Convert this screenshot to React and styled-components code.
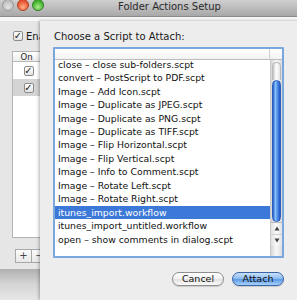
import React from 'react';
import styled, {createGlobalStyle} from "styled-components";

const GlobalStyle = createGlobalStyle`
  html, body {
    margin: 0;
    padding: 0;
    background: #e6e6e6;
  }
  * { box-sizing: border-box; }
`

const font = `"DejaVu Sans", "Liberation Sans", sans-serif`

const StyledScreen = styled.div`
  position: relative;
  width: 297px;
  height: 300px;
  overflow: hidden;
  background: #e6e6e6;
  font-family: ${font};
  color: #1a1a1a;
`

const StyledTitleBar = styled.div`
  position: relative;
  height: 17px;
  display: flex;
  align-items: flex-start;
  gap: 3px;
  padding-left: 2px;
  background: linear-gradient(#cfcfcf, #a8a8a8);
  border-bottom: 1px solid #8a8a8a;
`

const StyledLight = styled.div`
  width: 12px;
  height: 12px;
  margin-top: -1px;
  border-radius: 50%;
  background: radial-gradient(circle at 50% 70%, ${p => p.$light} 0%, ${p => p.$color} 70%);
  border: 1px solid ${p => p.$edge};
`

const StyledTitle = styled.div`
  position: absolute;
  left: 0;
  right: -42px;
  top: 1px;
  text-align: center;
  font-size: 10px;
  color: #2a2a2a;
`

const StyledWindowBody = styled.div`
  display: flex;
  flex-direction: column;
  padding: 10px 0 0 12px;
  height: 252px;
  border-top: 4px solid #f6f6f6;
`

const StyledEnableRow = styled.div`
  display: flex;
  align-items: center;
  gap: 3px;
  padding-left: 1px;
  font-size: 10px;
  height: 10px;
`

const StyledEnableLabel = styled.span`
  width: 15px;
  overflow: hidden;
  white-space: nowrap;
`

const StyledCheck = styled.span`
  display: inline-flex;
  align-items: center;
  justify-content: center;
  width: 10px;
  height: 10px;
  border: 1px solid #8c8c8c;
  border-radius: 2px;
  background: linear-gradient(#ffffff, #e2e2e2);
  font-size: 10px;
  line-height: 10px;
  color: #222;
  font-weight: bold;
`

const StyledTable = styled.div`
  margin-top: 10px;
  width: 260px;
  height: 187px;
  background: white;
  border: 1px solid #b4b4b4;
  border-right: none;
`

const StyledHeaderRow = styled.div`
  display: flex;
  height: 10px;
  background: linear-gradient(#ffffff, #ececec);
  border-bottom: 1px solid #b8b8b8;
`

const StyledHeaderCell = styled.div`
  width: 28px;
  font-size: 8.5px;
  line-height: 10px;
  text-align: center;
  border-right: 1px solid #c4c4c4;
`

const StyledActionRow = styled.div`
  display: flex;
  height: 17px;
  background: ${p => p.$selected ? '#d4d4d4' : 'white'};
`

const StyledCheckCell = styled.div`
  width: 28px;
  display: flex;
  align-items: center;
  justify-content: center;
  padding-left: 3px;
`

const StyledBarButtons = styled.div`
  display: flex;
  margin: 11px 0 0 4px;
`

const StyledBarButton = styled.div`
  width: 17px;
  height: 14px;
  border: 1px solid #a8a8a8;
  margin-left: -1px;
  background: linear-gradient(#fbfbfb, #e8e8e8);
  font-size: 10px;
  line-height: 12px;
  text-align: center;
  color: #444;
`

const StyledBottomBand = styled.div`
  height: 30px;
  background: linear-gradient(#b0b0b0, #d4d4d4 50%, #e6e6e6);
`

const StyledSheet = styled.div`
  position: absolute;
  left: 40px;
  top: 21px;
  right: -20px;
  bottom: 0;
  background: #ededed;
  box-shadow: -1px 0 3px rgba(0, 0, 0, 0.3);
  padding: 10px 0 0 13px;
  display: flex;
  flex-direction: column;
`

const StyledHeading = styled.div`
  font-size: 10px;
  line-height: 12px;
  margin-left: 1px;
`

const StyledListBox = styled.div`
  margin-top: 4px;
  width: 231px;
  height: 211px;
  border: 2px solid #7aa7dc;
  border-radius: 1px;
  background: white;
  display: grid;
  grid-template-columns: 1fr 12px;
  grid-template-rows: 11px 1fr;
  overflow: hidden;
`

const StyledListHeader = styled.div`
  background: linear-gradient(#ffffff, #f2f2f2);
  border-bottom: 1px solid #bdbdbd;
  border-right: ${p => p.$corner ? 'none' : '1px solid #d0d0d0'};
`

const StyledRows = styled.div`
  overflow: hidden;
`

const StyledRowsInner = styled.div`
  margin-top: -2.25px;
`

const StyledRow = styled.div`
  height: 13.46px;
  line-height: 13.46px;
  font-size: 9.3px;
  padding-left: 3px;
  white-space: nowrap;
  background: ${p => p.$selected ? '#3b78d8' : 'transparent'};
  color: ${p => p.$selected ? 'white' : '#111'};
`

const StyledScroller = styled.div`
  display: flex;
  flex-direction: column;
  background: linear-gradient(90deg, #d6d6d6, #f4f4f4 40%, #f4f4f4 60%, #dadada);
  border-left: 1px solid #c8c8c8;
  padding: 2px 0 4px 0;
`

const StyledTrackCap = styled.div`
  height: 18px;
  margin: 0 1px;
  border-radius: 6px 6px 0 0;
  background: linear-gradient(90deg, #c6c6c6, #ffffff 45%, #e4e4e4);
  border: 1px solid #b8b8b8;
  border-bottom: none;
`

const StyledThumb = styled.div`
  height: 142px;
  margin: 0 1px;
  border-radius: 5px;
  background: linear-gradient(90deg, #1f5fd0, #8cc0f8 35%, #5b9cf0 55%, #1d55c4);
  border: 1px solid #2a5cb8;
`

const StyledArrow = styled.div`
  height: 12px;
  display: flex;
  align-items: center;
  justify-content: center;
  border-top: 1px solid ${p => p.$first ? '#bbbbbb' : '#d0d0d0'};
  background: linear-gradient(90deg, #e2e2e2, #fbfbfb 50%, #e2e2e2);
`

const StyledSheetButtons = styled.div`
  display: flex;
  justify-content: flex-end;
  gap: 8px;
  width: 231px;
  margin-top: 14px;
`

const StyledPill = styled.div`
  width: 52px;
  height: 14px;
  border-radius: 7px;
  font-size: 9.5px;
  line-height: 12px;
  text-align: center;
  color: #111;
  border: 1px solid ${p => p.$primary ? '#3a64a8' : '#8e8e8e'};
  background: ${p => p.$primary
      ? 'linear-gradient(#c9e0fa, #8fbdf1 45%, #5e9ae6 55%, #a8d2fb)'
      : 'linear-gradient(#ffffff, #f2f2f2 45%, #e2e2e2 55%, #fbfbfb)'};
  box-shadow: 0 1px 1px rgba(0, 0, 0, 0.15);
`

const scripts = [
    'close – close sub-folders.scpt',
    'convert – PostScript to PDF.scpt',
    'Image – Add Icon.scpt',
    'Image – Duplicate as JPEG.scpt',
    'Image – Duplicate as PNG.scpt',
    'Image – Duplicate as TIFF.scpt',
    'Image – Flip Horizontal.scpt',
    'Image – Flip Vertical.scpt',
    'Image – Info to Comment.scpt',
    'Image – Rotate Left.scpt',
    'Image – Rotate Right.scpt',
    'itunes_import.workflow',
    'itunes_import_untitled.workflow',
    'open – show comments in dialog.scpt',
]

const Triangle = ({up}) => (
    <svg width="6" height="5" viewBox="0 0 6 5">
        <path d={up ? "M3 0.5 L5.5 4.5 L0.5 4.5 Z" : "M3 4.5 L5.5 0.5 L0.5 0.5 Z"} fill="#444"/>
    </svg>
)

const App = () => {
    return (
        <StyledScreen>
            <GlobalStyle/>
            <StyledTitleBar>
                <StyledLight $color="#bcbcbc" $light="#e4e4e4" $edge="#999"/>
                <StyledLight $color="#e8502e" $light="#ffb08a" $edge="#b04020"/>
                <StyledLight $color="#3fae2a" $light="#a8ec8a" $edge="#2d8020"/>
                <StyledTitle>Folder Actions Setup</StyledTitle>
            </StyledTitleBar>
            <StyledWindowBody>
                <StyledEnableRow>
                    <StyledCheck>✓</StyledCheck>
                    <StyledEnableLabel>Enable Folder Actions</StyledEnableLabel>
                </StyledEnableRow>
                <StyledTable>
                    <StyledHeaderRow>
                        <StyledHeaderCell>On</StyledHeaderCell>
                    </StyledHeaderRow>
                    <StyledActionRow>
                        <StyledCheckCell><StyledCheck>✓</StyledCheck></StyledCheckCell>
                    </StyledActionRow>
                    <StyledActionRow $selected>
                        <StyledCheckCell><StyledCheck>✓</StyledCheck></StyledCheckCell>
                    </StyledActionRow>
                </StyledTable>
                <StyledBarButtons>
                    <StyledBarButton>+</StyledBarButton>
                    <StyledBarButton>−</StyledBarButton>
                </StyledBarButtons>
            </StyledWindowBody>
            <StyledBottomBand/>

            <StyledSheet>
                <StyledHeading>Choose a Script to Attach:</StyledHeading>
                <StyledListBox>
                    <StyledListHeader/>
                    <StyledListHeader $corner/>
                    <StyledRows>
                        <StyledRowsInner>
                            {scripts.map(name => (
                                <StyledRow key={name} $selected={name === 'itunes_import.workflow'}>
                                    {name}
                                </StyledRow>
                            ))}
                        </StyledRowsInner>
                    </StyledRows>
                    <StyledScroller>
                        <StyledTrackCap/>
                        <StyledThumb/>
                        <StyledArrow $first><Triangle up/></StyledArrow>
                        <StyledArrow><Triangle/></StyledArrow>
                    </StyledScroller>
                </StyledListBox>
                <StyledSheetButtons>
                    <StyledPill>Cancel</StyledPill>
                    <StyledPill $primary>Attach</StyledPill>
                </StyledSheetButtons>
            </StyledSheet>
        </StyledScreen>
    );
};

export default App;
